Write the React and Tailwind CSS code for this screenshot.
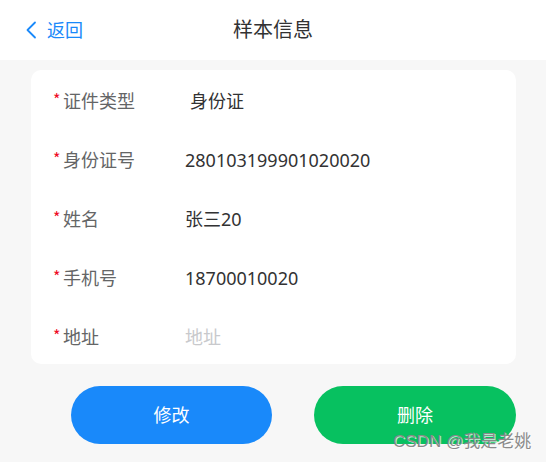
import React from "react";

const font = { fontFamily: '"Noto Sans", "Noto Sans CJK SC", sans-serif' };

function Row({ label, value, placeholder, valueClass = "" }) {
  return (
    <div className="flex items-center h-[59px]">
      <div className="flex items-center w-[154px] pl-[22px]">
        <span
          className="text-[#ee0a24] text-[16px] leading-none w-[10px] -mt-[3px]"
          style={{ fontFamily: '"Noto Sans CJK SC", sans-serif' }}
        >
          *
        </span>
        <span className="text-[18px] text-[#646566] leading-none">{label}</span>
      </div>
      {placeholder ? (
        <span className="text-[18px] text-[#c8c9cc] leading-none">{placeholder}</span>
      ) : (
        <span className={"text-[18px] text-[#323233] leading-none " + valueClass}>{value}</span>
      )}
    </div>
  );
}

export default function App() {
  return (
    <div className="w-[546px] h-[462px] bg-[#f7f7f7] relative overflow-hidden" style={font}>
      <div className="h-[60px] bg-white relative flex items-center justify-center">
        <div className="absolute left-[25px] top-0 h-[60px] flex items-center text-[#1989fa]">
          <svg width="12" height="18" viewBox="0 0 12 18" className="mr-[10px]">
            <polyline points="10,1.5 2.5,9 10,16.5" fill="none" stroke="#1989fa" strokeWidth="1.8" strokeLinecap="round" strokeLinejoin="round" />
          </svg>
          <span className="text-[18px] leading-none">返回</span>
        </div>
        <span className="text-[20px] text-[#323233] leading-none">样本信息</span>
      </div>
      <div className="mt-[10px] ml-[31px] mr-[30px] bg-white rounded-[10px] pt-[1px] h-[294px]">
        <Row label="证件类型" value="身份证" valueClass="ml-[5px]" />
        <Row label="身份证号" value="280103199901020020" />
        <Row label="姓名" value="张三20" />
        <Row label="手机号" value="18700010020" />
        <Row label="地址" placeholder="地址" />
      </div>
      <div className="mt-[22px] ml-[71px] flex gap-[42px]">
        <button className="w-[201px] h-[58px] rounded-full bg-[#1989fa] text-white text-[18px] leading-none">修改</button>
        <button className="w-[202px] h-[58px] rounded-full bg-[#07c160] text-white text-[18px] leading-none">删除</button>
      </div>
      <div
        className="absolute left-[393px] top-[433px] text-[17px] leading-none text-[#8a8a8a] whitespace-nowrap"
        style={{ fontFamily: '"Liberation Sans", "Noto Sans CJK SC", sans-serif', textShadow: "1px 1px 0 rgba(255,255,255,0.7)" }}
      >
        CSDN @我是老姚
      </div>
    </div>
  );
}
